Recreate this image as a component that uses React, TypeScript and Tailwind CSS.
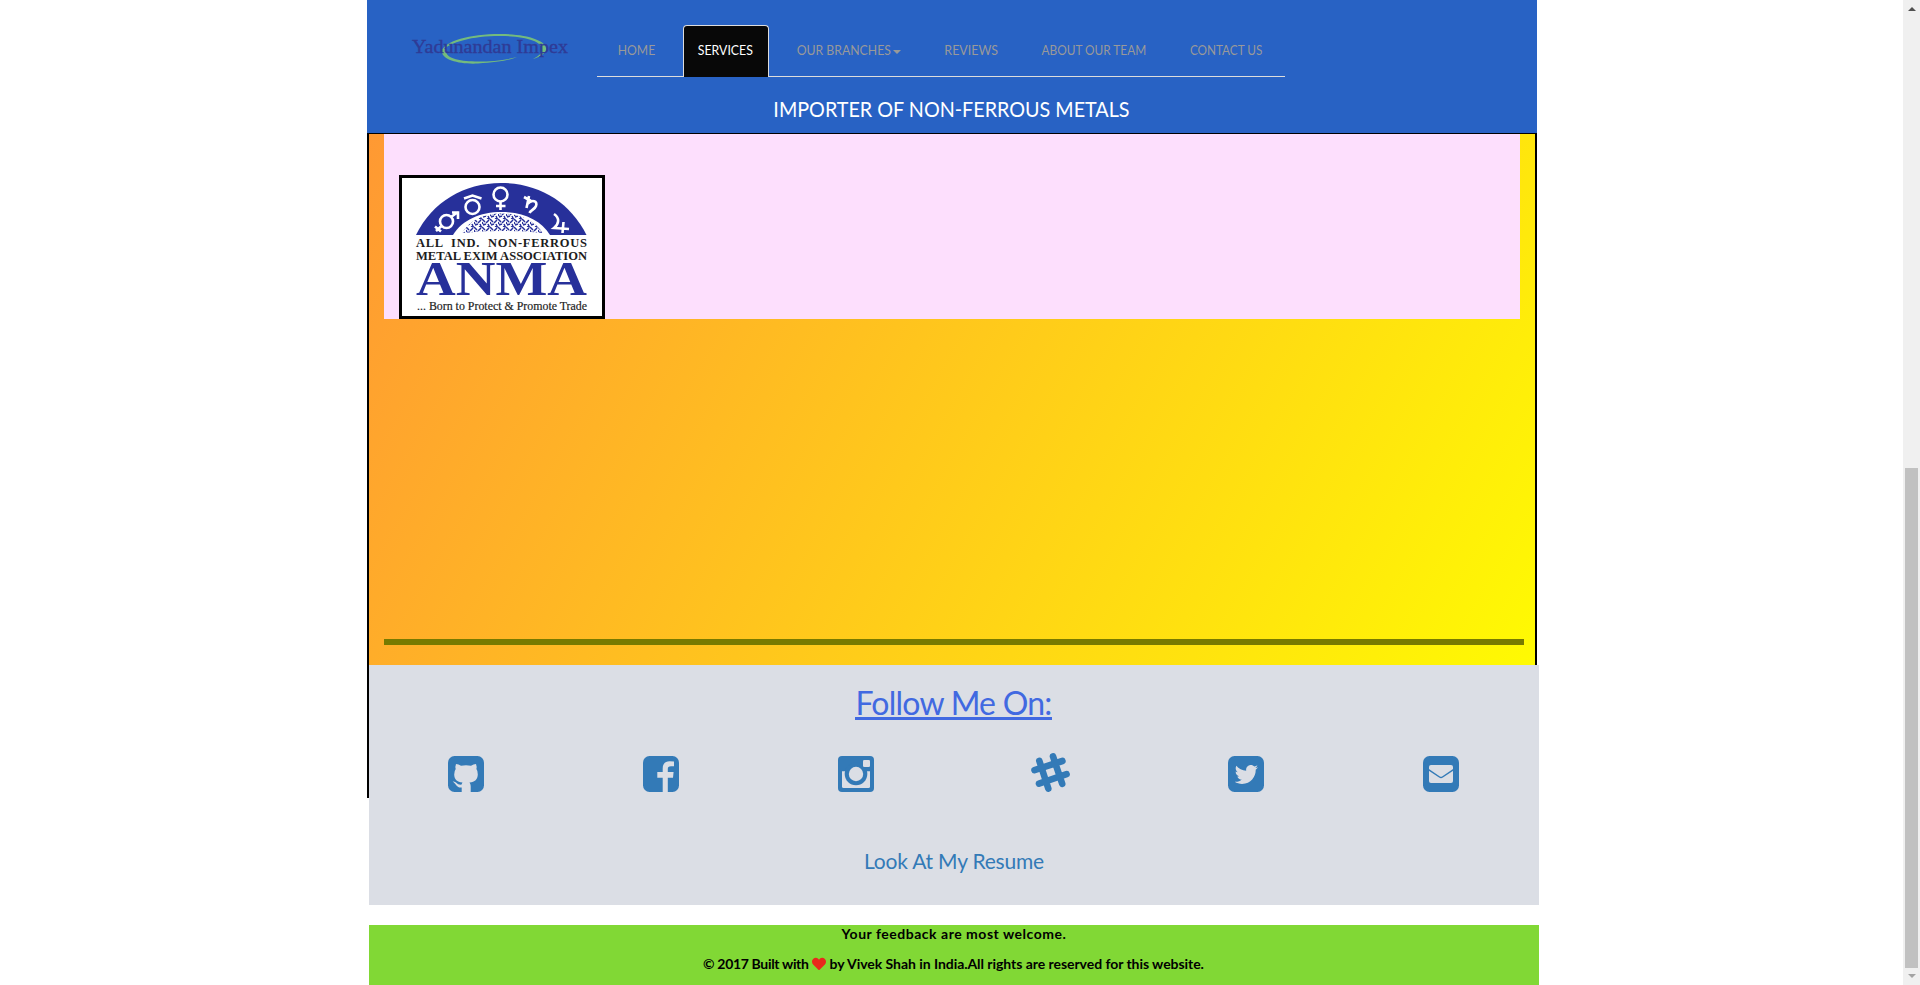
import type { ReactNode } from "react";
import { FaHeart, FaTwitter } from "react-icons/fa";

function BrandLogo() {
  return (
    <svg width="166" height="40" viewBox="0 0 166 40" className="block" aria-label="Yadunandan Impex">
      <g fill="#7cc576" fillOpacity="0.9">
        <path d="M34 23C36 13 62 6 92 6C120 6 140 13 138 22C137 26 132 29 125 31C131 28 134 25 134 21.500C134 13 117 8 92 8C64 8 42 14 34 23Z" />
        <path d="M34 21C31 32 52 36.500 70 35.500C88 34.500 101 32.500 109 29C98 32 84 33.500 70 33.500C53 33.500 36 31 38 21Z" />
      </g>
      <text x="4" y="25" fontSize="19" textLength="156" lengthAdjust="spacingAndGlyphs" fill="#2f3b96" stroke="#2f3b96" strokeWidth="0.350" fontFamily="Liberation Serif, serif">
        Yadunandan Impex
      </text>
    </svg>
  );
}

function AnmaLogo() {
  return (
    <svg width="200" height="138" viewBox="0 0 200 138" className="block bg-white" fontFamily="Liberation Serif, serif">
      <defs>
        <pattern id="lattice" width="8" height="8" patternUnits="userSpaceOnUse">
          <rect width="8" height="8" fill="#fff" />
          <path d="M0 1L3 4M4 5L7 2M1 7L4 6M5 0L8 1M0 4L1 6M6 6L7 8" stroke="#27309a" strokeWidth="1.500" />
        </pattern>
      </defs>
      <path d="M14 57C30 24 62 5 99 5C137 5 168 24 184.500 57Z" fill="#27309a" />
      <path d="M51 57C60 42 78 34 99.500 34C121 34 139 42 148 57Z" fill="#fff" />
      <path d="M60 55C68 42 82 35.500 99.500 35.500C117 35.500 132 42 141 55Q120 53 99.500 53Q80 53 60 55Z" fill="url(#lattice)" />
      <g fill="none" stroke="#fff" strokeWidth="2.600">
        <circle cx="44.500" cy="43.500" r="6.500" />
        <path d="M49 39L56 34M50 34.500H56V41M39.500 48L34 53M33 48.500L39 53.500" />
        <circle cx="70.500" cy="29" r="7" />
        <path d="M62 20.500L70.500 17.500L79.500 20.500" />
        <circle cx="98.500" cy="16.500" r="7" />
        <path d="M98.500 23.500V32M94 28H103.500" />
        <path d="M122 19L129 23M127 18L124.500 30M125.500 26C130 21 136 23 134 28C133 31 129 32 127.500 35" />
        <path d="M152 36C158 40 157 46 152 50L167 51M161.500 44L160.500 55" />
      </g>
      <g fontWeight="bold" fill="#1c1c1c">
        <text x="14" y="69" fontSize="12.500" textLength="171" wordSpacing="4">ALL IND. NON-FERROUS</text>
        <text x="14" y="82" fontSize="12.500" textLength="171" lengthAdjust="spacingAndGlyphs">METAL EXIM ASSOCIATION</text>
      </g>
      <text x="14" y="117" fontSize="48" fontWeight="bold" fill="#27309a" textLength="171" lengthAdjust="spacingAndGlyphs">ANMA</text>
      <text x="15" y="132" fontSize="13" fill="#222" stroke="#222" strokeWidth="0.200" textLength="170" lengthAdjust="spacingAndGlyphs">... Born to Protect &amp; Promote Trade</text>
    </svg>
  );
}

function Tile({ children }: { children: ReactNode }) {
  return (
    <svg width="36" height="36" viewBox="0 0 36 36" className="block">
      <rect width="36" height="36" rx="6.500" fill="#337ab7" />
      {children}
    </svg>
  );
}

const GithubIcon = () => (
  <Tile>
    <path
      fill="#dbdee5"
      d="M8 8Q10.500 8 13 9.700Q18 8.800 23 9.700Q25.500 8 28 8Q29 10.500 28.400 13Q30 15 29.800 18.500C29.600 23.500 27 26 21.500 26.500Q22.700 28 22.700 30V36H13.700V31.500C8.500 32 8.500 28 4.700 25.500C8.500 25 9 29.500 13.700 28.500Q13.800 27.400 14.500 26.500C9 26 6.300 23.500 6.200 18.500Q6.200 15 7.700 13Q7 10.500 8 8Z"
    />
  </Tile>
);

const FacebookIcon = () => (
  <Tile>
    <path
      fill="#dbdee5"
      d="M19.700 36V21.700H14.300V16H19.700V12.500C19.700 8 22.200 5.200 26.500 5.200Q29.500 5.200 31 5.500V10.200H28C25.500 10.200 24.800 11.200 24.800 13V16H30.600L30 21.700H24.800V36Z"
    />
  </Tile>
);

const InstagramIcon = () => (
  <svg width="36" height="36" viewBox="0 0 36 36" className="block">
    <rect width="36" height="36" rx="4" fill="#337ab7" />
    <path d="M4 15.200H32V30.500Q32 32 30.500 32H5.500Q4 32 4 30.500Z" fill="#dbdee5" />
    <circle cx="18" cy="18" r="11.300" fill="#337ab7" />
    <circle cx="18" cy="18" r="7.200" fill="#dbdee5" />
    <rect x="25" y="4" width="7" height="7" rx="1.300" fill="#dbdee5" />
  </svg>
);

const SlackIcon = () => (
  <svg width="40" height="40" viewBox="0 0 40 40" className="-mt-[2px] block" stroke="#337ab7" strokeWidth="6.600" strokeLinecap="round">
    <path d="M8.300 7.800L17.300 35.600M22 3.400L31.200 30.800M3.500 17.200L31.400 8M8 30.600L35.600 21.200" />
  </svg>
);

const TwitterIcon = () => (
  <Tile>
    <FaTwitter x="6.700" y="6.700" size={23.4} color="#dbdee5" />
  </Tile>
);

const MailIcon = () => (
  <Tile>
    <rect x="6" y="9" width="24" height="18" rx="2" fill="#dbdee5" />
    <path d="M5.500 13.600L16.500 21Q18 22 19.500 21L30.500 13.600" fill="none" stroke="#337ab7" strokeWidth="1.500" />
  </Tile>
);

const socials: { name: string; icon: ReactNode }[] = [
  { name: "GitHub", icon: <GithubIcon /> },
  { name: "Facebook", icon: <FacebookIcon /> },
  { name: "Instagram", icon: <InstagramIcon /> },
  { name: "Slack", icon: <SlackIcon /> },
  { name: "Twitter", icon: <TwitterIcon /> },
  { name: "Email", icon: <MailIcon /> },
];

function Header() {
  return (
    <header className="flex h-[133px] w-[1170px] flex-col bg-[#2862c4]">
      <div className="flex h-[77px] items-start">
        <div className="ml-[41px] mt-[28px] w-[189px]">
          <BrandLogo />
        </div>
        <nav className="mt-[25px] flex h-[52px] w-[688px] whitespace-nowrap text-sm leading-[50px] text-[#999]">
          <a className="flex h-[52px] w-[86px] justify-center border-b border-[#ddd] pr-[7px]">
            <span className="inline-block scale-x-[0.87]">HOME</span>
          </a>
          <a className="flex h-[52px] w-[86px] justify-center rounded-t border border-b-0 border-[#ddd] bg-[#080808] pr-px text-white">
            <span className="inline-block scale-x-[0.88] leading-[48px]">SERVICES</span>
          </a>
          <a className="flex h-[52px] w-[160px] items-start justify-center border-b border-[#ddd]">
            <span className="flex w-[94px] justify-center">
              <span className="inline-block scale-x-[0.875]">OUR BRANCHES</span>
            </span>
            <span className="ml-[2px] mt-[25px] border-x-4 border-t-4 border-x-transparent border-t-[#999]" />
          </a>
          <a className="flex h-[52px] w-[84px] justify-center border-b border-[#ddd]">
            <span className="inline-block scale-x-[0.89]">REVIEWS</span>
          </a>
          <a className="flex h-[52px] w-[162px] justify-center border-b border-[#ddd]">
            <span className="inline-block scale-x-[0.845]">ABOUT OUR TEAM</span>
          </a>
          <a className="flex h-[52px] w-[110px] justify-center border-b border-[#ddd] pr-[8px]">
            <span className="inline-block scale-x-[0.84]">CONTACT US</span>
          </a>
        </nav>
      </div>
      <h1 className="mt-[16px] flex justify-center pr-[2px] text-[21px] leading-[32px] text-white">
        <span className="inline-block scale-x-[0.94]">IMPORTER OF NON-FERROUS METALS</span>
      </h1>
    </header>
  );
}

function Social() {
  return (
    <section className="h-[240px] w-[1170px] bg-[#dbdee5]">
      <h2 className="flex h-[75px] items-center justify-center pr-px pt-[3px]">
        <span className="border-b-[3px] border-[#4169e1] text-[32px] leading-[29px] tracking-[-0.75px] text-[#4169e1]">
          Follow Me On:
        </span>
      </h2>
      <div className="grid h-[68px] grid-cols-6">
        {socials.map((s) => (
          <a key={s.name} className="flex items-center justify-center pr-px">
            {s.icon}
          </a>
        ))}
      </div>
      <p className="mt-[37px] text-center text-[21px] leading-[32px] tracking-[-0.2px] text-[#337ab7]">Look At My Resume</p>
    </section>
  );
}

function Footer() {
  return (
    <footer className="mt-5 h-[60px] w-[1170px] bg-[#81d835] text-center text-sm font-bold text-black">
      <p className="h-[18px] leading-[18px] tracking-[0.52px]">Your feedback are most welcome.</p>
      <p className="flex h-[42px] items-center justify-center pr-[1px]">
        <span className="tracking-[-0.33px]">© 2017 Built with</span>
        <FaHeart size={14} color="#e8291c" className="ml-[3px] mr-[4px]" />
        <span className="tracking-[-0.05px]">by Vivek Shah in India.All rights are reserved for this website.</span>
      </p>
    </footer>
  );
}

function Scrollbar() {
  return (
    <div className="flex h-full w-[17px] flex-col items-center bg-[#f0f0f0]">
      <span className="mt-[7px] border-x-[4px] border-b-[4px] border-x-transparent border-b-[#505050]" />
      <span className="mt-[457px] h-[500px] w-[13px] bg-[#c1c1c1]" />
      <span className="mt-[6px] border-x-[4px] border-t-[4px] border-x-transparent border-t-[#a3a3a3]" />
    </div>
  );
}

export default function App() {
  return (
    <div className="flex h-[985px] w-[1920px] overflow-hidden bg-white font-['Lato',sans-serif]">
      <main className="h-full flex-1 pl-[367px]">
        <Header />
        <div className="h-[665px] w-[1170px] border-x-2 border-t border-black bg-[linear-gradient(120deg,#ff9933,#ffff00)]">
          <div className="ml-[15px] h-[185px] w-[1136px] bg-[#fddffd] pl-[15px] pt-[41px]">
            <div className="h-[144px] w-[206px] border-[3px] border-black">
              <AnmaLogo />
            </div>
          </div>
          <hr className="mb-[20px] ml-[15px] mt-[320px] h-[6px] w-[1140px] border-0 bg-[#777a00]" />
          <Social />
          <Footer />
        </div>
      </main>
      <Scrollbar />
    </div>
  );
}
